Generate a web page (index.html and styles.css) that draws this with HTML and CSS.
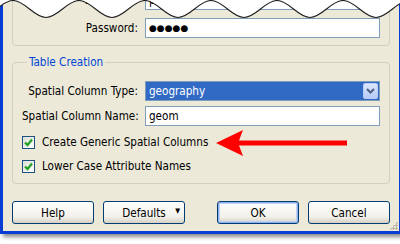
FILE: index.html
```html
<!DOCTYPE html>
<html lang="en">

<head>
    <meta charset="UTF-8">
    <meta name="viewport" content="width=device-width, initial-scale=1.0">
    <title>Table Creation</title>
    <link rel="stylesheet" href="styles.css">
</head>

<body>
    <div class="shot">
        <div class="dialog">
            <div class="group">
                <div class="form-grid">
                    <label class="field-label">Database:</label>
                    <div class="textbox">postgis</div>
                    <label class="field-label">Password:</label>
                    <div class="textbox dots">●●●●●</div>
                </div>
            </div>

            <fieldset class="group">
                <legend>Table Creation</legend>
                <div class="form-grid first">
                    <label class="field-label">Spatial Column Type:</label>
                    <div class="combo">
                        <span class="combo-value">geography</span>
                        <span class="combo-button">
                            <svg width="9" height="6" viewBox="0 0 9 6">
                                <path d="M1 1 L4.5 4.5 L8 1" fill="none" stroke="#4d6185" stroke-width="2"/>
                            </svg>
                        </span>
                    </div>
                    <label class="field-label">Spatial Column Name:</label>
                    <div class="textbox">geom</div>
                </div>
                <div class="check-row">
                    <span class="checkbox">
                        <svg width="11" height="11" viewBox="0 0 11 11">
                            <path d="M2 5.5 L4.5 8 L9 2.5" fill="none" stroke="#21a121" stroke-width="2.2"/>
                        </svg>
                    </span>
                    <span>Create Generic Spatial Columns</span>
                </div>
                <div class="check-row">
                    <span class="checkbox">
                        <svg width="11" height="11" viewBox="0 0 11 11">
                            <path d="M2 5.5 L4.5 8 L9 2.5" fill="none" stroke="#21a121" stroke-width="2.2"/>
                        </svg>
                    </span>
                    <span>Lower Case Attribute Names</span>
                </div>
            </fieldset>

            <div class="buttons">
                <div class="button-group">
                    <button>Help</button>
                    <button class="split">Defaults <span class="caret">▼</span></button>
                </div>
                <div class="button-group">
                    <button class="default">OK</button>
                    <button>Cancel</button>
                </div>
            </div>
            <div class="grip"></div>
        </div>

        <!-- torn top edge -->
        <svg class="torn" width="400" height="20" viewBox="0 0 400 20">
            <path d="M-20 17.5 c12 0 21 -17 33 -17 c12 0 21 17 33 17 c12 0 21 -17 33 -17 c12 0 21 17 33 17 c12 0 21 -17 33 -17 c12 0 21 17 33 17 c12 0 21 -17 33 -17 c12 0 21 17 33 17 c12 0 21 -17 33 -17 c12 0 21 17 33 17 c12 0 21 -17 33 -17 c12 0 21 17 33 17 c12 0 21 -17 33 -17 c12 0 21 17 33 17 L420 -2 L-20 -2 Z" fill="#ffffff"/>
            <path d="M-20 17.5 c12 0 21 -17 33 -17 c12 0 21 17 33 17 c12 0 21 -17 33 -17 c12 0 21 17 33 17 c12 0 21 -17 33 -17 c12 0 21 17 33 17 c12 0 21 -17 33 -17 c12 0 21 17 33 17 c12 0 21 -17 33 -17 c12 0 21 17 33 17 c12 0 21 -17 33 -17 c12 0 21 17 33 17 c12 0 21 -17 33 -17 c12 0 21 17 33 17" fill="none" stroke="#1c1c1c" stroke-width="1.1"/>
        </svg>

        <!-- callout arrow -->
        <svg class="arrow" width="136" height="30" viewBox="0 0 136 30">
            <path d="M0 15 L27 2 L23 12.5 L131 12.5 L131 17.5 L23 17.5 L27 28 Z" fill="#ff0000"/>
        </svg>
    </div>
</body>

</html>
```

FILE: styles.css
```css
/* General Styles */
body {
    margin: 0;
    background-color: #ffffff;
    font-family: 'DejaVu Sans Condensed', 'DejaVu Sans', sans-serif;
    font-size: 11.6px;
    color: #000000;
}

.shot {
    position: relative;
    width: 400px;
    height: 244px;
    overflow: hidden;
}

.dialog {
    position: relative;
    width: 378px;
    margin-top: -31px;
    padding: 8px 9px 7px 9px;
    background-color: #ece9d8;
    border-left: 3px solid #0a3dd4;
    border-right: 3px solid #0a3dd4;
    border-bottom: 3px solid #0a3dd4;
    box-shadow: 3px 3px 4px rgba(0, 0, 0, 0.45);
}

/* Group boxes */
.group {
    margin: 0;
    padding: 12px 9px 7px 9px;
    border: 1px solid #d0d0bf;
    border-radius: 4px;
}

fieldset.group {
    margin-top: 10px;
    padding: 0 9px 9px 9px;
}

legend {
    margin-left: 5px;
    padding: 0 2px;
    line-height: 13px;
    color: #0046d5;
}

.form-grid {
    display: grid;
    grid-template-columns: 116px 1fr;
    column-gap: 7px;
    row-gap: 8px;
    align-items: center;
}

.form-grid.first {
    margin-top: 12px;
    row-gap: 5px;
}

.field-label {
    text-align: right;
    white-space: nowrap;
    color: #000;
}

.textbox {
    height: 18px;
    line-height: 18px;
    padding: 0 3px;
    background-color: #ffffff;
    border: 1px solid #7f9db9;
}

.dots {
    font-family: 'DejaVu Sans', sans-serif;
    font-size: 9px;
}

.combo {
    display: flex;
    height: 18px;
    padding: 0 1px 0 0;
    background-color: #316ac5;
    border: 1px solid #7f9db9;
    align-items: center;
}

.combo-value {
    flex: 1;
    padding-left: 3px;
    color: #ffffff;
    line-height: 18px;
}

.combo-button {
    display: flex;
    width: 15px;
    height: 16px;
    align-items: center;
    justify-content: center;
    background: linear-gradient(#dbe6fd, #b6cbf8);
    border: 1px solid #b9cdf7;
    border-radius: 2px;
    box-sizing: border-box;
}

/* Checkboxes */
.check-row {
    display: flex;
    align-items: center;
    gap: 7px;
    height: 16px;
    margin-top: 8px;
}

.checkbox {
    display: flex;
    width: 11px;
    height: 11px;
    align-items: center;
    justify-content: center;
    border: 1px solid #1c5180;
    background: linear-gradient(135deg, #dcdcd7, #ffffff);
}

/* Buttons */
.buttons {
    display: flex;
    justify-content: space-between;
    margin-top: 17px;
}

.button-group {
    display: flex;
    gap: 9px;
}

button {
    position: relative;
    width: 82px;
    height: 23px;
    padding: 0;
    font-family: inherit;
    font-size: 11.6px;
    color: #000;
    background: linear-gradient(#ffffff, #f2f1ea 70%, #d6d0c5);
    border: 1px solid #003c74;
    border-radius: 3px;
}

button.default {
    box-shadow: inset 0 0 0 1px #8fb0ea, inset 0 0 0 2px #bcd0f4;
}

.caret {
    position: absolute;
    right: 4px;
    top: 5px;
    font-size: 7px;
}

.grip {
    position: absolute;
    right: 1px;
    bottom: 1px;
    width: 9px;
    height: 9px;
    background-image: radial-gradient(circle, #b9b5a6 1px, transparent 1.2px);
    background-size: 3px 3px;
    clip-path: polygon(100% 0, 100% 100%, 0 100%);
}

/* Overlays */
.torn {
    position: absolute;
    left: 0;
    top: 0;
}

.arrow {
    position: absolute;
    left: 216px;
    top: 128px;
}
```
